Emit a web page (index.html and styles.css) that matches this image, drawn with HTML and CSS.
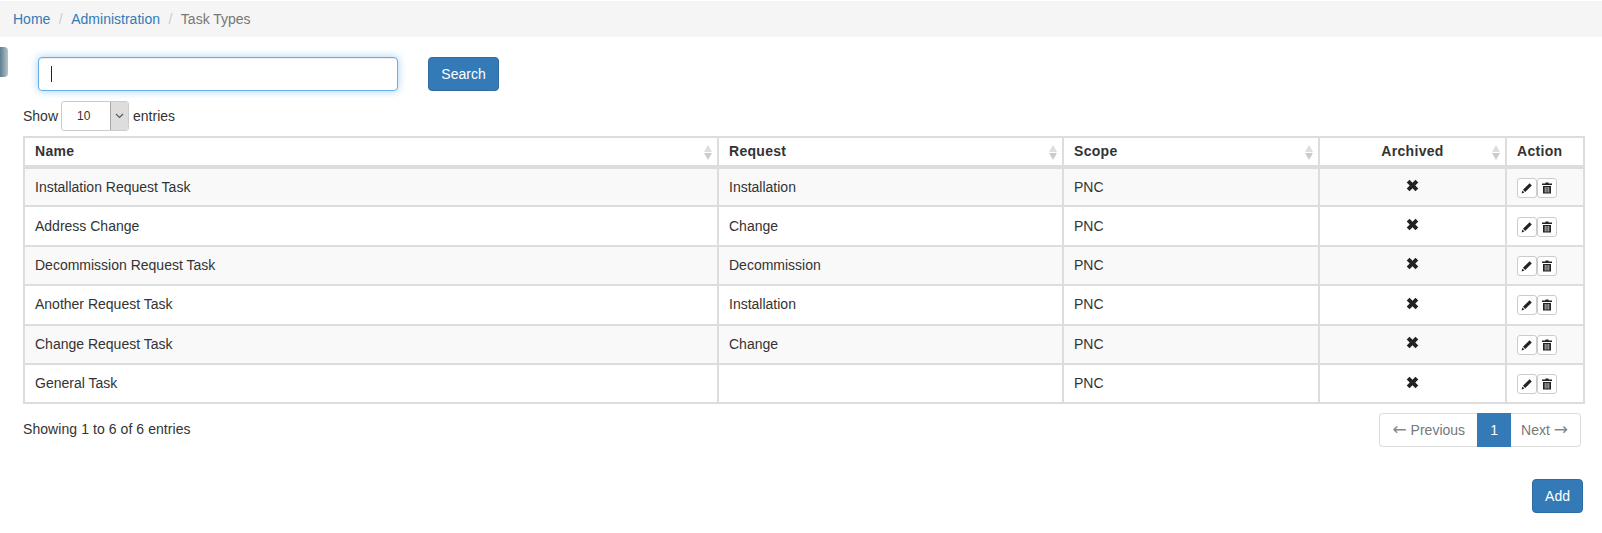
FILE: index.html
```html
<!DOCTYPE html>
<html lang="en">
<head>
  <meta charset="UTF-8">
  <title>Task Types</title>
  <link rel="stylesheet" href="styles.css">
</head>
<body>

  <ol class="breadcrumb">
    <li><a href="#">Home</a></li>
    <li class="sep">/</li>
    <li><a href="#">Administration</a></li>
    <li class="sep">/</li>
    <li class="current">Task Types</li>
  </ol>

  <div class="side-tab"></div>

  <div class="content">
    <form class="search-row">
      <div class="search-box"><span class="caret"></span></div>
      <button type="button" class="btn btn-search">Search</button>
    </form>

    <div class="length-row">
      <span>Show</span>
      <div class="select-box">
        <span class="select-value">10</span>
        <span class="select-arrow">
          <svg width="9" height="6" viewBox="0 0 9 6"><path d="M1 1l3.5 3.5L8 1" fill="none" stroke="#555" stroke-width="1.1"/></svg>
        </span>
      </div>
      <span>entries</span>
    </div>

    <table class="data-table">
      <colgroup>
        <col class="col-name">
        <col class="col-request">
        <col class="col-scope">
        <col class="col-archived">
        <col>
      </colgroup>
      <thead>
        <tr>
          <th class="sortable">Name</th>
          <th class="sortable">Request</th>
          <th class="sortable">Scope</th>
          <th class="sortable center">Archived</th>
          <th>Action</th>
        </tr>
      </thead>
      <tbody id="rows"></tbody>
    </table>

    <div class="table-footer">
      <div class="table-info">Showing 1 to 6 of 6 entries</div>
      <ul class="pagination">
        <li class="muted first"><span class="arrow">←</span> Previous</li>
        <li class="active">1</li>
        <li class="muted last">Next <span class="arrow">→</span></li>
      </ul>
    </div>

    <div class="actions">
      <button type="button" class="btn">Add</button>
    </div>
  </div>

  <script>
    const tasks = [
      ["Installation Request Task", "Installation"],
      ["Address Change", "Change"],
      ["Decommission Request Task", "Decommission"],
      ["Another Request Task", "Installation"],
      ["Change Request Task", "Change"],
      ["General Task", ""]
    ];

    const removeIcon = '<svg class="icon-x" width="15" height="15" viewBox="0 0 14 14"><path d="M4.2 1.6L7 4.4l2.8-2.8 2.6 2.6L9.6 7l2.8 2.8-2.6 2.6L7 9.6l-2.8 2.8-2.6-2.6L4.4 7 1.6 4.2z" fill="#222"/></svg>';
    const pencilIcon = '<svg width="12" height="12" viewBox="0 0 12 12"><path d="M8.6 1.2l2.2 2.2-6.6 6.6-2.2-2.2zM1.4 8.6l2 2-2.8.8z" fill="#222"/></svg>';
    const trashIcon = '<svg width="12" height="12" viewBox="0 0 12 12"><path d="M4.4 0.6h3.2v1H11v1.5H1V1.6h3.4zM2 4h8v7.4H2zM3.8 5v5.4h.7V5zM5.65 5v5.4h.7V5zM7.5 5v5.4h.7V5z" fill="#222" fill-rule="evenodd"/></svg>';

    const tbody = document.getElementById("rows");
    tasks.forEach(task => {
      const row = document.createElement("tr");
      row.innerHTML = `<td>${task[0]}</td><td>${task[1]}</td><td>PNC</td>` +
        `<td class="center">${removeIcon}</td>` +
        `<td><div class="btn-group"><a class="icon-btn">${pencilIcon}</a><a class="icon-btn">${trashIcon}</a></div></td>`;
      tbody.appendChild(row);
    });
  </script>
</body>
</html>
```

FILE: styles.css
```css
body {
  font-family: "Liberation Sans", Arial, sans-serif;
  font-size: 14px;
  line-height: 20px;
  color: #333;
  background: #fff;
  margin: 0;
}

a {
  color: #337ab7;
  text-decoration: none;
}

.breadcrumb {
  display: flex;
  gap: 8px;
  list-style: none;
  height: 36px;
  align-items: center;
  margin: 1px 0 0;
  padding: 0 13px;
  background: #f5f5f5;
}

.breadcrumb .sep {
  color: #ccc;
  padding: 0 .5px;
}

.breadcrumb .current {
  color: #777;
}

.side-tab {
  position: absolute;
  left: 0;
  top: 47px;
  width: 8px;
  height: 30px;
  border-radius: 0 4px 4px 0;
  background: linear-gradient(to right, #5f7d8c, #b4c4cc);
}

.content {
  padding: 20px 18px 0 23px;
}

.search-row {
  display: flex;
  gap: 30px;
  margin: 0 0 10px 15px;
}

.search-box {
  position: relative;
  box-sizing: border-box;
  width: 360px;
  height: 34px;
  background: #fff;
  border: 1px solid #66afe9;
  border-radius: 4px;
  box-shadow: inset 0 1px 1px rgba(0,0,0,.075), 0 0 8px rgba(102,175,233,.6);
}

.caret {
  position: absolute;
  left: 12px;
  top: 8px;
  width: 1px;
  height: 16px;
  background: #222;
}

.btn {
  box-sizing: border-box;
  height: 34px;
  padding: 6px 12px;
  font: inherit;
  color: #fff;
  background: #337ab7;
  border: 1px solid #2e6da4;
  border-radius: 4px;
}

.btn-search {
  width: 71px;
  padding: 6px 0;
}

.length-row {
  display: flex;
  align-items: center;
  gap: 3px;
  height: 30px;
  margin-bottom: 5px;
}

.select-box {
  display: flex;
  box-sizing: border-box;
  width: 68px;
  height: 30px;
  margin-right: 1px;
  border: 1px solid #ccc;
  border-radius: 3px;
  font-size: 12px;
  overflow: hidden;
}

.select-value {
  flex: 1;
  padding-left: 15px;
  line-height: 28px;
}

.select-arrow {
  display: flex;
  align-items: center;
  justify-content: center;
  width: 17px;
  background: #ddd;
  border-left: 1px solid #aaa;
}

.data-table {
  width: 1562px;
  table-layout: fixed;
  border-collapse: collapse;
  border: 2px solid #ddd;
}

.col-name { width: 694px; }
.col-request { width: 345px; }
.col-scope { width: 256px; }
.col-archived { width: 187px; }

.data-table th,
.data-table td {
  box-sizing: border-box;
  padding: 0 10px;
  text-align: left;
  border: 2px solid #ddd;
}

.data-table th {
  position: relative;
  height: 30px;
  padding-bottom: 1px;
  border-bottom-width: 4px;
  letter-spacing: .3px;
}

.data-table td {
  height: 39.4px;
  padding-bottom: 1px;
}

.data-table tbody tr:nth-child(odd) {
  background: #f9f9f9;
}

.data-table .center {
  text-align: center;
}

.sortable::before,
.sortable::after {
  content: "";
  position: absolute;
  right: 5px;
  border-left: 4.5px solid transparent;
  border-right: 4.5px solid transparent;
}

.sortable::before {
  top: 7px;
  border-bottom: 7px solid #ddd;
}

.sortable::after {
  top: 15px;
  border-top: 7px solid #ccc;
}

.icon-x {
  display: block;
  margin: -2px auto 0;
}

.btn-group {
  display: flex;
  margin-top: 2px;
}

.icon-btn {
  display: flex;
  align-items: center;
  justify-content: center;
  box-sizing: border-box;
  width: 20px;
  height: 20px;
  background: #fff;
  border: 1px solid #ccc;
  border-radius: 3px;
}

.table-footer {
  display: flex;
  justify-content: space-between;
  align-items: flex-start;
  margin-top: 9px;
  padding-right: 3px;
}

.table-info {
  padding-top: 6px;
  letter-spacing: .07px;
}

.pagination {
  display: flex;
  list-style: none;
  margin: 0;
  padding: 0;
}

.pagination li {
  box-sizing: border-box;
  height: 34px;
  padding: 6px 12px;
  border: 1px solid #ddd;
  background: #fff;
}

.pagination .arrow {
  font-family: "DejaVu Sans", sans-serif;
  font-size: 17px;
  line-height: 18px;
  color: #888;
}

.pagination .muted {
  color: #777;
}

.pagination .first {
  border-radius: 4px 0 0 4px;
  border-right: 0;
}

.pagination .last {
  padding-left: 10px;
  border-radius: 0 4px 4px 0;
  border-left: 0;
}

.pagination .active {
  width: 34px;
  text-align: center;
  color: #fff;
  background: #337ab7;
  border-color: #337ab7;
}

.actions {
  display: flex;
  justify-content: flex-end;
  margin-top: 32px;
  padding-right: 1px;
}
```
